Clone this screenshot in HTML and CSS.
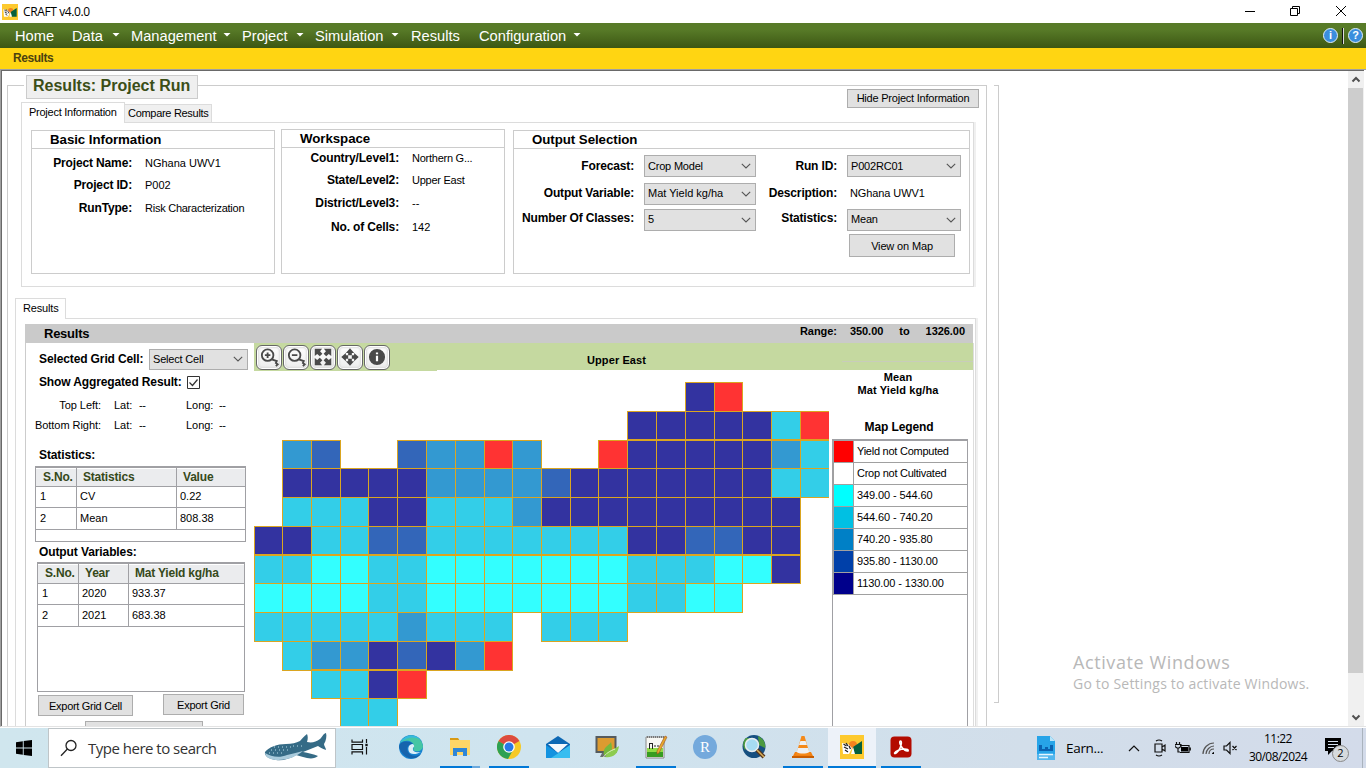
FILE: index.html
```html
<!DOCTYPE html>
<html lang="en">
<head>
<meta charset="utf-8">
<title>CRAFT v4.0.0</title>
<link rel="stylesheet" href="styles.css">
</head>
<body>
<svg class="defs" width="0" height="0">
  <symbol id="craft" viewBox="0 0 24 24">
    <rect width="24" height="24" fill="#fdc92e"/><circle cx="13" cy="10" r="4" fill="#f5821f"/>
    <path d="M2 8l6 1 4 4-3 6H3z" fill="#fff"/><path d="M13 12l9-6v13h-8z" fill="#075f3d"/>
    <path d="M3.500 9l3 2M6 8l2 3M4 12l4 2M5 15l3 2M9 11l1.500 3" stroke="#222" stroke-width="1.3" fill="none"/>
    <path d="M11 19l2-7 2 7z" fill="#fff"/>
  </symbol>
  <symbol id="arrow" viewBox="0 0 10 6"><path d="M.8.8L5 5 9.200.8" fill="none" stroke="#555" stroke-width="1.1"/></symbol>
</svg>
<div class="screen">
  <header class="titlebar">
    <svg class="appicon"><use href="#craft"/></svg>
    <span class="apptitle">CRAFT v4.0.0</span>
    <svg class="winctl" width="104" height="14" viewBox="0 0 104 14" fill="none" stroke="#000">
      <path d="M1 7.500h10"/><path d="M46.500 4.500h7v7h-7zM48.500 4.500v-2h7v7h-2"/><path d="M92 2l10 10M102 2L92 12"/>
    </svg>
  </header>
  <nav class="menubar">
    <span class="mi home">Home</span>
    <span class="mi data">Data</span><i class="caret"></i>
    <span class="mi mgmt">Management</span><i class="caret"></i>
    <span class="mi proj">Project</span><i class="caret"></i>
    <span class="mi sim">Simulation</span><i class="caret"></i>
    <span class="mi res">Results</span>
    <span class="mi conf">Configuration</span><i class="caret"></i>
    <div class="help">
      <span class="orb">i</span><i class="sep"></i><span class="orb">?</span>
    </div>
  </nav>
  <div class="crumb"><span>Results</span></div>

  <main class="client">
    <div class="page">
      <section class="group">
        <div class="grouphead"><h1>Results: Project Run</h1></div>
        <button class="btn hide">Hide Project Information</button>
        <div class="tabs">
          <span class="tab on pi">Project Information</span><span class="tab off">Compare Results</span>
        </div>
        <div class="infopage">
          <section class="box basic">
            <h2>Basic Information</h2>
            <dl><dt>Project Name:</dt><dd>NGhana UWV1</dd><dt>Project ID:</dt><dd>P002</dd><dt>RunType:</dt><dd class="tight">Risk Characterization</dd></dl>
          </section>
          <section class="box work">
            <h2>Workspace</h2>
            <dl><dt>Country/Level1:</dt><dd class="tight">Northern G...</dd><dt>State/Level2:</dt><dd class="tight">Upper East</dd><dt>District/Level3:</dt><dd>--</dd><dt>No. of Cells:</dt><dd>142</dd></dl>
          </section>
          <section class="box out">
            <h2>Output Selection</h2>
            <div class="form">
              <div class="fcol a">
                <div class="f"><label>Forecast:</label><span class="sel">Crop Model<svg><use href="#arrow"/></svg></span></div>
                <div class="f"><label>Output Variable:</label><span class="sel">Mat Yield kg/ha<svg><use href="#arrow"/></svg></span></div>
                <div class="f"><label>Number Of Classes:</label><span class="sel">5<svg><use href="#arrow"/></svg></span></div>
              </div>
              <div class="fcol b">
                <div class="f"><label>Run ID:</label><span class="sel">P002RC01<svg><use href="#arrow"/></svg></span></div>
                <div class="f"><label>Description:</label><span class="val">NGhana UWV1</span></div>
                <div class="f"><label>Statistics:</label><span class="sel">Mean<svg><use href="#arrow"/></svg></span></div>
                <button class="btn view">View on Map</button>
              </div>
            </div>
          </section>
        </div>
        <div class="tabs two"><span class="tab on rs">Results</span></div>
        <div class="respage">
          <div class="reshead"><h3>Results</h3><p><span>Range:</span><span>350.00</span><span>to</span><span>1326.00</span></p></div>
          <div class="resbody">
            <aside class="side">
              <div class="row cell"><b>Selected Grid Cell:</b><span class="sel">Select Cell<svg><use href="#arrow"/></svg></span></div>
              <div class="row agg"><b>Show Aggregated Result:</b><svg class="check" viewBox="0 0 13 13"><path d="M.5.5h12v12H.500z" fill="#fff" stroke="#333"/><path d="M2.500 6.500l3 3 5-6" fill="none" stroke="#333" stroke-width="1.200"/></svg></div>
              <div class="row coord tl"><span>Top Left:</span><span>Lat:</span><span>--</span><span>Long:</span><span>--</span></div>
              <div class="row coord"><span>Bottom Right:</span><span>Lat:</span><span>--</span><span>Long:</span><span>--</span></div>
              <b class="cap st">Statistics:</b>
              <div class="tbl stats">
                <div class="tr th"><span>S.No.</span><span>Statistics</span><span>Value</span></div>
                <div class="tr"><span>1</span><span>CV</span><span>0.22</span></div>
                <div class="tr"><span>2</span><span>Mean</span><span>808.38</span></div>
              </div>
              <b class="cap">Output Variables:</b>
              <div class="tbl vars">
                <div class="tr th"><span>S.No.</span><span>Year</span><span>Mat Yield kg/ha</span></div>
                <div class="tr"><span>1</span><span>2020</span><span>933.37</span></div>
                <div class="tr"><span>2</span><span>2021</span><span>683.38</span></div>
              </div>
              <div class="exports"><button class="btn ec">Export Grid Cell</button><button class="btn eg">Export Grid</button></div>
              <div class="btn cut"></div>
            </aside>
            <div class="mapside">
              <div class="maptools">
                <span class="tool"><svg viewBox="0 0 24 24"><circle cx="10.500" cy="10" r="6.300"/><path d="M7.500 10h6M10.500 7v6M15 14.500l5.500 2-1 2 2 1.500-2 2"/></svg></span>
                <span class="tool"><svg viewBox="0 0 24 24"><circle cx="10.500" cy="10" r="6.300"/><path d="M7.500 10h6M15 14.500l5.500 2-1 2 2 1.500-2 2"/></svg></span>
                <span class="tool"><svg viewBox="0 0 24 24" class="solid"><path d="M3 3h8L8.800 5.700 11.300 8.500 8.500 11.300 5.700 8.800 3 11zM21 3v8l-2.700-2.200L15.500 11.300 12.700 8.500l2.500-2.800L13 3zM3 21v-8l2.700 2.200 2.800-2.500 2.800 2.800-2.500 2.800L11 21zM21 21h-8l2.200-2.700-2.500-2.800 2.800-2.800 2.800 2.500L21 13z"/></svg></span>
                <span class="tool"><svg viewBox="0 0 24 24" class="solid"><path d="M12 2.500l4.500 5h-2.500v2.500h-4V7.500H7.500zM12 21.500l4.500-5h-2.500v-2.500h-4v2.500H7.500zM2.500 12l5-4.500v2.500H10v4H7.500v2.500zM21.500 12l-5-4.500v2.500H14v4h2.500v2.500z"/></svg></span>
                <span class="tool"><svg viewBox="0 0 24 24"><circle cx="12" cy="12" r="7.800" class="fill"/><path d="M12 10.500v6M12 7v2" class="w"/></svg></span>
                <span class="region">Upper East</span>
              </div>
              <div class="mapbody">
                <svg id="map" width="578" height="357" viewBox="0 0 578 357" shape-rendering="crispEdges"></svg>
                <div class="legend">
                  <p class="lt">Mean<br>Mat Yield kg/ha</p>
                  <p class="lm">Map Legend</p>
                  <div class="ltable">
                    <div class="lr"><i class="c0"></i><span class="tight">Yield not Computed</span></div>
                    <div class="lr"><i></i><span class="tight">Crop not Cultivated</span></div>
                    <div class="lr"><i class="c1"></i><span>349.00 - 544.60</span></div>
                    <div class="lr"><i class="c2"></i><span>544.60 - 740.20</span></div>
                    <div class="lr"><i class="c3"></i><span>740.20 - 935.80</span></div>
                    <div class="lr"><i class="c4"></i><span>935.80 - 1130.00</span></div>
                    <div class="lr"><i class="c5"></i><span>1130.00 - 1330.00</span></div>
                  </div>
                </div>
              </div>
            </div>
          </div>
        </div>
      </section>
      <div class="splitter"></div>
      <div class="watermark"><p class="w1">Activate Windows</p><p class="w2">Go to Settings to activate Windows.</p></div>
    </div>
    <div class="scroll">
      <svg viewBox="0 0 16 17"><path d="M4.500 10.500L8 7l3.500 3.500" fill="none" stroke="#505050" stroke-width="2"/></svg>
      <div class="thumb"></div>
      <svg class="dn" viewBox="0 0 16 17"><path d="M4.500 6.500L8 10l3.500-3.500" fill="none" stroke="#505050" stroke-width="2"/></svg>
    </div>
  </main>

  <footer class="taskbar">
    <div class="start"><svg width="16" height="16" viewBox="0 0 16 16"><path d="M0 2.200L6.800 1.200V7.500H0zM7.700 1.100L16 0v7.500H7.700zM0 8.400h6.800v6.400L0 13.800zM7.700 8.400H16V16l-8.300-1.100z"/></svg></div>
    <div class="search">
      <svg width="18" height="18" viewBox="0 0 18 18" fill="none" stroke="#222" stroke-width="1.300"><circle cx="11" cy="6.500" r="5"/><path d="M7.400 10L1 16.700"/></svg>
      <span>Type here to search</span>
      <svg class="fish" width="64" height="32" viewBox="0 0 64 32">
        <path d="M1 20c4-5 12-8 21-8 6 0 10-1 14-3 2-2 4-5 7-7 1 2 1 5 0 8 5 1 9 0 13-3 2-2 4-6 6-6 1 3 0 8-2 11 0 2 2 4 2 6-4-1-6-3-8-4-5 2-10 4-15 6 5 1 11 2 15 4-3 3-9 3-15 1l-7-2c-6 4-14 6-20 5C5 27 0 24 1 20z" fill="#356b86"/>
        <path d="M1 21c6 4 15 5 22 2 6-1 11-3 16-4-6 5-14 9-25 9C7 28 2 26 1 21z" fill="#a9cbdc"/>
        <path d="M7 18h18M10 15h20M5 21h14M29 14h12" stroke="#b8dce8" stroke-width="1" stroke-dasharray="1 3" fill="none"/>
      </svg>
    </div>
    <div class="task tv"><svg width="18" height="16" viewBox="0 0 18 16" fill="none" stroke="#111" stroke-width="1.200"><path d="M1 .5v2.700h10.500V.5M1 5.500h10.500v5H1zM1 15.500v-2.700h10.500v2.700M15.500 0v4M15.500 8v7.500"/><path d="M14.300 6h2.400" stroke-width="2.400"/></svg></div>
    <div class="task"><svg viewBox="0 0 24 24"><circle cx="12" cy="12" r="12" fill="#1783d1"/><path d="M1 8A12 12 0 0 1 24 11c0 4-4 6-8 5-3-1-1-3-1-5-1-5-8-7-14-3z" fill="#46c6a4"/><path d="M1 8C5-1 17-2 22 5c-7-4-14-3-21 3z" fill="#35b9df"/><path d="M0 12c1-6 9-7 14-3-5 0-7 4-5 8 2 4 8 5 13 2-5 7-18 6-22-7z" fill="#1664ad"/><path d="M14 9c-5 0-6 6-3 9 3 2 7 1 11-1-4 1-9 0-8-4 1-1 2-2 0-4z" fill="#dceef7"/></svg></div>
    <div class="task run more"><svg viewBox="0 0 24 24"><path d="M2 3h8l2 3H2z" fill="#d99a13"/><path d="M2 5h20v15H2z" fill="#ffd667"/><path d="M5 21v-8h14v8h-4v-4H9v4z" fill="#2f86d6"/></svg></div>
    <div class="task run"><svg viewBox="0 0 24 24"><circle cx="12" cy="12" r="12" fill="#f6c926"/><path d="M12 12L1.600 6A12 12 0 0 1 22.400 6z" fill="#dd4b3e"/><path d="M1.600 6A12 12 0 0 0 11 24l5-9-4-3z" fill="#2ea153"/><path d="M1.600 6h20.800H12v6z" fill="#dd4b3e"/><circle cx="12" cy="12" r="5.800" fill="#fff"/><circle cx="12" cy="12" r="4.500" fill="#2878e6"/></svg></div>
    <div class="task"><svg viewBox="0 0 24 24"><path d="M0 9l12-8 12 8v14H0z" fill="#0d68b4"/><path d="M2 9h20l-10 9z" fill="#f4f8fc"/><path d="M0 10l12 8-6 5H0z" fill="#1393e0"/><path d="M24 10L5 23h19z" fill="#38bdf0"/></svg></div>
    <div class="task"><svg viewBox="0 0 24 24"><path d="M1.500 2h19v15h-19z" fill="#dc9b30" stroke="#555b5e" stroke-width="2"/><path d="M5 22h8l-1-4H7z" fill="#6a6f70"/><path d="M9 20C7 12 14 11 16 7c2 7 1 14-7 13z" fill="#76b83c"/><path d="M10 22c4-6 7-7 14-11-1 9-7 12-14 11z" fill="#8dcc50"/><path d="M7 24c4-6 8-8 13-10" stroke="#e2f4c5" fill="none"/></svg></div>
    <div class="task run"><svg viewBox="0 0 24 24"><path d="M2 2h18v21H2z" fill="#f7f7f3" stroke="#888"/><path d="M3 13h16v9H3z" fill="#8fdc45"/><path d="M3 17h16v5H3z" fill="#379c21"/><path d="M3 2h17" stroke="#777" stroke-width="2" stroke-dasharray="1 1"/><path d="M5.500 8v6M5 8.500h3M8.500 8v6M10 11h2M13 11h2" stroke="#222"/><path d="M21 1l2 1-8 16-2 1v-3z" fill="#e8a92c" stroke="#9b4d20" stroke-width=".6"/></svg></div>
    <div class="task"><span class="rst">R</span></div>
    <div class="task"><svg viewBox="0 0 24 24"><circle cx="12" cy="11.500" r="11.500" fill="#164f80"/><path d="M4 3c4 0 9 1 7 5-3 2-6 5-8 7C0 10 1 6 4 3zM16 1c5 2 8 7 7 12l-6-3z" fill="#4c9a40"/><circle cx="10" cy="10" r="6.500" fill="#a7dcf2" stroke="#e8edf0" stroke-width="1.500"/><path d="M15 15l7 7" stroke="#57361f" stroke-width="4"/><path d="M15 15l7 7" stroke="#d8b15a" stroke-width="1.500"/></svg></div>
    <div class="task run"><svg viewBox="0 0 24 24"><path d="M4 17h16l3 6H1z" fill="#f28010"/><path d="M10.500 1h3L19 20H5z" fill="#f58a1a"/><path d="M9.400 6h5.200l1.400 4H8zM7 13h10l1.300 4c-3 2-10 2-12.600 0z" fill="#eef0f2"/><path d="M1 22h22" stroke="#c95d00" stroke-width="2"/></svg></div>
    <div class="task active"><svg viewBox="0 0 24 24"><use href="#craft"/></svg></div>
    <div class="task run"><svg viewBox="0 0 24 24"><rect x="1.500" y="1.500" width="21" height="21" rx="4" fill="#b30b00"/><path d="M11.500 6c-2 0 0 6 4 9 5 3 5-1 0-1-4 0-9 2-10 4 0 2 4-1 5.500-5 1.500-3 2-7 .5-7z" fill="none" stroke="#fff" stroke-width="1.500"/></svg></div>
    <div class="tray">
      <svg width="18" height="24" viewBox="0 0 18 24"><path d="M0 0h13l5 5v19H0z" fill="#27a4e8"/><path d="M13 0v5h5z" fill="#b8e5fa"/><path d="M0 18h18v6H0z" fill="#52b6ee"/><path d="M2 15V9h3v4h3v-2h3v2h2V9h3v6z" fill="#0b62b0"/><path d="M2 18.500h14M2 21.500h9" stroke="#e5f6ff" stroke-width="1.600"/></svg>
      <span class="news">Earn...</span>
      <svg class="i1" width="14" height="8" viewBox="0 0 12 8"><path d="M1 7l5-5 5 5" class="ln"/></svg>
      <svg class="i2" width="12" height="18" viewBox="0 0 12 18"><path d="M1 5h7v8H1zM8 8l3-2v6l-3-2M2 2q3-2 6 0M2 16q3 2 6 0" class="ln"/></svg>
      <svg class="i3" width="16" height="14" viewBox="0 0 16 14"><path d="M5 4.500h9v7H5M15.300 6.500v3" class="ln"/><path d="M6 6h7v4.500H6z"/><path d="M1.500 1v2M4.500 1v2M0 3.500h6v2L4 7H2L0 5.500zM3 7v4h2" class="ln"/></svg>
      <svg class="i4" width="13" height="13" viewBox="0 0 13 13"><path d="M1 12C1 6 6 1 12 1M4 12c0-4 4-8 8-8M7 12c0-3 2-5 5-5" class="ln gy"/><path d="M10 12c0-1 1-2 2-2v2z"/></svg>
      <svg class="i5" width="15" height="14" viewBox="0 0 15 14"><path d="M1 5h2.500L7 1.500v11L3.500 9H1zM9.500 5l4 4M13.500 5l-4 4" class="ln"/></svg>
      <div class="clock">11:22<br>30/08/2024</div>
      <div class="note"><svg width="17" height="17" viewBox="0 0 17 17"><path d="M0 0h16v13h-9l-4 4v-4H0z"/><path d="M3 3.500h10M3 6.500h10M3 9.500h6" stroke="#d5dfec"/></svg><span class="badge">2</span></div>
      <i class="edge"></i>
    </div>
  </footer>
</div>
<script src="map.js"></script>
</body>
</html>
```
FILE: styles.css
```css
* { box-sizing: border-box; }
body { margin: 0; font-family: "Liberation Sans", Arial, sans-serif; font-size: 11px; color: #000; background: #fff; }
h1, h2, h3, p, dl, dd { margin: 0; }
.defs { display: block; }
.screen { width: 1366px; height: 768px; display: flex; flex-direction: column; overflow: hidden; }

.titlebar { height: 23px; display: flex; align-items: center; padding: 0 18px 0 2px; flex: none; }
.appicon { width: 16px; height: 16px; }
.apptitle { font: 12px/16px "Open Sans", sans-serif; letter-spacing: -.38px; margin-left: 5px; }
.winctl { margin: -2px 0 0 auto; }

.menubar { height: 25px; flex: none; display: flex; align-items: center; background: linear-gradient(#587b28 0, #587b28 25%, #3c5713 100%); color: #fff; font-size: 14.67px; }
.mi { flex: none; white-space: nowrap; }
.home { width: 57px; margin-left: 15px; }
.data { width: 40px; }
.mgmt { width: 92px; }
.proj { width: 54px; }
.sim { width: 76px; }
.res { width: 68px; }
.conf { width: 94px; }
.caret { flex: none; width: 8px; height: 4px; margin-right: 11px; margin-top: -2px; background: #fff; clip-path: polygon(0 0, 100% 0, 50% 100%); }
.mgmt + .caret { margin-right: 11px; }
.sim + .caret { margin-right: 12px; }
.help { display: flex; align-items: center; margin-left: auto; padding-right: 3px; gap: 4px; }
.orb { width: 15px; height: 15px; border-radius: 50%; background: #3b8ede; border: 1.5px solid #e3eef8; font: bold 11px/12px "Liberation Sans", sans-serif; text-align: center; }
.sep { width: 2px; height: 16px; background: #111; border-right: 1px solid #ddd; }
.crumb { height: 21px; flex: none; background: #ffd512; padding-left: 13px; font: bold 12px/21px "Liberation Sans", sans-serif; color: #4b4210; letter-spacing: -.45px; }

.client { height: 658px; flex: none; display: flex; border: solid #a0a0a0; border-width: 1px 0 0 1px; border-bottom: 1px solid #e3e3e3; }
.page { width: 1347px; height: 656px; flex: none; display: flex; overflow: hidden; border: solid #696969; border-width: 1px 0 0 1px; }
.scroll { width: 16px; height: 656px; background: #f0f0f0; border-top: 1px solid #696969; display: flex; flex-direction: column; }
.scroll svg { width: 16px; height: 17px; flex: none; }
.thumb { height: 585px; width: 15px; background: #cdcdcd; }
.scroll .dn { margin-top: auto; }

.group { width: 980px; height: 700px; flex: none; margin: 14px 0 0 5px; border: 1px solid #ccc; }
.grouphead { height: 0; }
.grouphead h1 { width: 172px; height: 24px; margin: -11px 0 0 18px; background: #efefef; border: 1px solid #ccc; box-shadow: -2px 0 #fff; font: bold 16px/20px "Liberation Sans", sans-serif; color: #3b4e17; padding-left: 6px; white-space: nowrap; }
.btn { font: 11px "Liberation Sans", Arial, sans-serif; color: #000; background: #e1e1e1; border: 1px solid #adadad; padding: 0; text-align: center; white-space: nowrap; display: block; }
.hide { width: 132px; height: 19px; margin: 14px 0 0 839px; line-height: 17px; letter-spacing: -.22px; }
.tabs { display: flex; align-items: flex-end; height: 21px; margin: -7px 0 0 13px; width: 960px; }
.tab { border: 1px solid #dcdcdc; border-bottom: 0; line-height: 18px; white-space: nowrap; letter-spacing: -.15px; }
.on { background: #fff; height: 21px; margin-bottom: -1px; z-index: 1; padding-left: 7px; }
.pi { width: 104px; letter-spacing: -.25px; }
.off { background: #f0f0f0; height: 18px; width: 88px; padding-left: 3px; margin-left: -1px; letter-spacing: -.3px; line-height: 17px; }
.infopage { margin-left: 13px; width: 953px; height: 165px; border: 1px solid #dcdcdc; box-shadow: 2px 0 #f0f0f0; padding: 6px 0 0 9px; display: flex; align-items: flex-start; }
.box { border: 1px solid #ccc; flex: none; }
.box h2 { height: 18px; border-bottom: 1px solid #ccc; padding-left: 18px; font: bold 13.3px/18px "Liberation Sans", sans-serif; letter-spacing: -.06px; }
.basic { width: 244px; height: 144px; margin-top: 1px; }
.work { width: 224px; height: 145px; margin-left: 6px; }
.out { width: 457px; height: 144px; margin: 1px 0 0 8px; }
.box dl { display: grid; white-space: nowrap; }
.basic dl { grid-template-columns: 100px auto; column-gap: 13px; grid-template-rows: 22px 23px 22px; line-height: 22px; padding-top: 3px; }
.work dl { grid-template-columns: 117px auto; column-gap: 13px; grid-template-rows: 22px 23px 24px 22px; line-height: 20px; }
dt, label { font-weight: bold; font-size: 12px; text-align: right; letter-spacing: -.15px; }
.tight { letter-spacing: -.25px; }
.form { display: flex; padding-top: 6px; }
.fcol { display: flex; flex-direction: column; }
.f { display: flex; height: 25px; margin-bottom: 1px; align-items: center; }
.f:nth-child(1) { height: 24px; margin-bottom: 2px; align-items: flex-start; }
.f label { flex: none; white-space: nowrap; line-height: 22px; }
.a label { width: 120px; margin-right: 10px; }
.a .sel { width: 112px; }
.b label { width: 81px; margin-right: 10px; }
.b .sel { width: 114px; }
.sel { height: 22px; border: 1px solid #adadad; background: #e1e1e1; padding: 0 4px 0 3px; line-height: 21px; display: flex; align-items: center; justify-content: space-between; flex: none; white-space: nowrap; letter-spacing: -.2px; }
.a .f:nth-child(2) .sel { letter-spacing: 0; }
.sel svg { width: 10px; height: 6px; }
.f:nth-child(2) label { margin-top: -2px; }
.f:nth-child(3) label { margin-top: -3px; }
.val { padding-left: 3px; margin-top: -2px; letter-spacing: -.1px; }
.view { width: 106px; height: 23px; margin: 1px 0 0 93px; line-height: 22px; letter-spacing: -.15px; }
.two { margin: 10px 0 0 7px; }
.rs { width: 51px; height: 21px; }
.respage { margin-left: 7px; width: 961px; height: 420px; border: 1px solid #dcdcdc; box-shadow: 2px 0 #f0f0f0; padding: 5px 0 0 9px; }
.reshead { width: 948px; height: 19px; background: #cacaca; display: flex; justify-content: space-between; padding: 0 8px 0 19px; }
.reshead h3 { font: bold 13px/19px "Liberation Sans", sans-serif; letter-spacing: -.25px; }
.reshead p { font-weight: bold; line-height: 15px; display: flex; gap: 13px; white-space: nowrap; letter-spacing: -.05px; }
.reshead p span:nth-child(3) { margin: 0 3px; }
.resbody { display: flex; width: 949px; border-left: 1px solid #ccc; border-right: 1px solid #ddd; }
.side { width: 228px; flex: none; padding-left: 9px; }
.row { display: flex; align-items: center; white-space: nowrap; }
.side b { font-size: 12px; letter-spacing: -.1px; padding-left: 4px; }
.cell { height: 32px; }
.side .cell b { width: 114px; letter-spacing: -.12px; }
.cell .sel { width: 99px; height: 21px; }
.agg { height: 14px; }
.side .agg b { width: 152px; letter-spacing: -.13px; }
.check { width: 13px; height: 13px; }
.coord { height: 20px; letter-spacing: -.05px; }
.tl { margin-top: 6px; }
.coord span:nth-child(1) { width: 67px; text-align: right; margin-left: -1px; }
.coord span:nth-child(2) { margin-left: 13px; width: 25px; }
.coord span:nth-child(3) { width: 47px; letter-spacing: -.5px; }
.coord span:nth-child(4) { width: 33px; }
.coord span:nth-child(5) { letter-spacing: -.5px; }
.cap { display: block; height: 20px; line-height: 20px; }
.st { margin: 10px 0 1px; }
.tbl { border: 1px solid #a0a0a4; border-top-width: 2px; background: #fff; }
.tr { display: grid; height: 22px; line-height: 21px; }
.tr span { border: solid #a0a0a4; border-width: 0 0 1px 1px; padding-left: 3px; white-space: nowrap; }
.tr span:first-child { border-left: 0; padding-left: 4px; }
.th { font-weight: bold; font-size: 12px; color: #36491a; background: linear-gradient(#fff 1px, #ebecee 1px); height: 18px; line-height: 18px; }
.th span:nth-child(n) { padding-left: 7px; letter-spacing: -.2px; }
.stats { width: 211px; height: 76px; }
.stats .tr { grid-template-columns: 40px 100px auto; }
.vars { width: 208px; height: 130px; margin-left: 2px; }
.vars .tr { grid-template-columns: 40px 50px auto; }
.vars .th { height: 19px; line-height: 19px; }
.th span:nth-child(n+2) { padding-left: 6px; }
.exports { display: flex; margin: 2px 0 0 3px; height: 22px; }
.ec { width: 95px; height: 21px; margin-top: 1px; letter-spacing: -.3px; }
.eg { width: 81px; height: 21px; margin-left: 30px; letter-spacing: -.25px; }
.cut { width: 118px; height: 20px; margin: 5px 0 0 50px; }
.mapside { width: 719px; flex: none; }
.maptools { height: 27px; display: flex; align-items: flex-end; padding-left: 2px; gap: 1px; background: linear-gradient(#c8ccbb, #c8ccbb) 588px 18px / 131px 1px no-repeat, #c5d9a0; }
.tool { width: 26px; height: 25px; border: 1px solid #666; border-radius: 6px; background: linear-gradient(#fff, #ececec); flex: none; padding: 0 1px; box-shadow: inset 0 0 0 1px #fff, inset 0 0 2px 2px #ddd; }
.tool svg { width: 22px; height: 22px; fill: none; stroke: #4a4a4a; stroke-width: 2; display: block; }
.tool .solid { fill: #4a4a4a; stroke: none; }
.tool .fill { fill: #4a4a4a; stroke: #4a4a4a; }
.tool .w { stroke: #fff; stroke-width: 2.400; }
.region { font-weight: bold; line-height: 20px; margin-left: 196px; letter-spacing: .1px; }
.mapbody { display: flex; background: linear-gradient(#c5d9a0, #c5d9a0) 0 0 / 183px 1px no-repeat; }
#map { flex: none; display: block; }
.legend { width: 136px; flex: none; text-align: center; font-weight: bold; white-space: nowrap; }
.lt { line-height: 13px; padding: 1px 4px 0 0; height: 47px; letter-spacing: .1px; }
.lm { font-size: 12px; line-height: 20px; height: 22px; padding-right: 2px; letter-spacing: -.1px; }
.ltable { border: 1px solid #a0a0a4; border-top-width: 2px; font-weight: normal; height: 300px; text-align: left; }
.lr { display: flex; height: 22px; border-bottom: 1px solid #a0a0a0; line-height: 21px; letter-spacing: -.1px; }
.lr i { width: 21px; border: solid #a0a0a0; border-width: 0 1px; }
.lr span { padding-left: 3px; }
.c0 { background: #f00; } .c1 { background: #0ff; } .c2 { background: #00c0e3; } .c3 { background: #0080c6; } .c4 { background: #0040a9; } .c5 { background: #00008b; }
.splitter { width: 5px; height: 618px; margin: 14px 0 0 7px; border: solid #ccc; border-width: 1px 1px 1px 0; flex: none; }
.watermark { margin: 579px 0 0 74px; font-family: "Open Sans", sans-serif; color: #b8b8b8; white-space: nowrap; }
.w1 { font-size: 18px; line-height: 24px; letter-spacing: .6px; }
.w2 { font-size: 14px; line-height: 20px; letter-spacing: .2px; }

.taskbar { height: 40px; margin-top: 1px; flex: none; display: flex; background: linear-gradient(90deg, #d0e6ee 0, #cfe4ef 40%, #d2deea 75%, #d3dbea 100%); }
.start { width: 48px; display: flex; align-items: center; justify-content: center; }
.search { width: 288px; background: #fff; border: 1px solid #bfc5c8; display: flex; align-items: center; padding-left: 11px; font: 15px "Open Sans", sans-serif; color: #333; }
.search span { margin-left: 10px; width: 176px; letter-spacing: -.5px; white-space: nowrap; }
.task { width: 48px; margin-right: 1px; display: flex; align-items: center; justify-content: center; border-bottom: 2px solid transparent; }
.task svg { width: 24px; height: 24px; }
.task.tv { margin-right: 3px; }
.task.tv svg { width: 18px; height: 16px; }
.run { background: linear-gradient(#0078d7, #0078d7) 4px 100% / 40px 2px no-repeat border-box; }
.more { background: linear-gradient(90deg, #0078d7 32px, #6ba9dd 32px) 4px 100% / 40px 2px no-repeat border-box; }
.active { background: #edf2f9; border-color: #0078d7; }
.rst { width: 24px; height: 24px; border-radius: 50%; background: #74a9dc; color: #fff; font: 15px/24px "Liberation Serif", serif; text-align: center; }
.tray { margin-left: auto; display: flex; align-items: center; font: 12px "Open Sans", sans-serif; width: 329px; }
.tray svg { flex: none; }
.ln { fill: none; stroke: #111; stroke-width: 1.200; }
.gy { stroke: #555; }
.news { font-size: 13.5px; margin-left: 11px; width: 61px; letter-spacing: -.3px; }
.i2 { margin-left: 13px; } .i3 { margin-left: 9px; } .i4 { margin-left: 11px; } .i5 { margin-left: 8px; }
.clock { width: 70px; margin-left: 5px; text-align: center; line-height: 18px; letter-spacing: -.55px; }
.note { width: 25px; height: 24px; margin: 4px 0 0 12px; position: relative; }
.badge { position: absolute; left: 7px; top: 7px; width: 17px; height: 17px; border-radius: 50%; background: #d6dadd; border: 1px solid #888; text-align: center; font: 11px/14px "Open Sans", sans-serif; }
.edge { width: 1px; height: 40px; background: #aab3bd; margin-left: 12px; }
```
FILE: map.js
```js
// Yield grid of the region; one letter per cell, "." where there is no cell.
const rows = [
  "...............NR...",
  ".............NNNNNCR",
  ".BM..MBBRB..RNNNNNBC",
  ".NNNNNBBBBMNNNNNNNCC",
  ".CCCNNCCCBNNNNNNNNN.",
  "NNCCMMCCCCCCCNNMMNN.",
  "CCAACCAAAAAAACCCAAN.",
  "AAAACCAAAAAAACCAA...",
  "CCCCCBCCC.CCC.......",
  ".CBBNMNBR...........",
  "..CCNR..............",
  "...CC..............."
];
const fills = { N: "#3333a0", R: "#ff3333", B: "#3399d1", M: "#3366b9", C: "#33cee8", A: "#33ffff" };
const xs = [0, 28, 57, 86, 114, 143, 172, 201, 230, 258, 287, 316, 344, 373, 402, 431, 460, 488, 517, 546, 575];
const ys = [12, 41, 70, 98, 127, 156, 185, 213, 242, 271, 300, 328, 357];
const map = document.getElementById("map");

function rect(x, y, w, h, fill) {
  const r = document.createElementNS("http://www.w3.org/2000/svg", "rect");
  Object.entries({ x, y, width: w, height: h, fill }).forEach(([k, v]) => r.setAttribute(k, v));
  map.append(r);
}

const line = "#daa520";
rows.forEach((row, j) => [...row].forEach((c, i) => {
  if (c === ".") return;
  const x = xs[i], y = ys[j], w = xs[i + 1] - x, h = ys[j + 1] - y;
  const above = j > 0 && rows[j - 1][i] !== ".";
  const thick = above && [2, 6, 10].includes(j);
  rect(x, thick ? y - 1 : y, i === 19 ? w : w + 1, h + (thick ? 2 : 1), line);
  rect(x + 1, y + 1, w - 1, h - 1, fills[c]);
}));
```
